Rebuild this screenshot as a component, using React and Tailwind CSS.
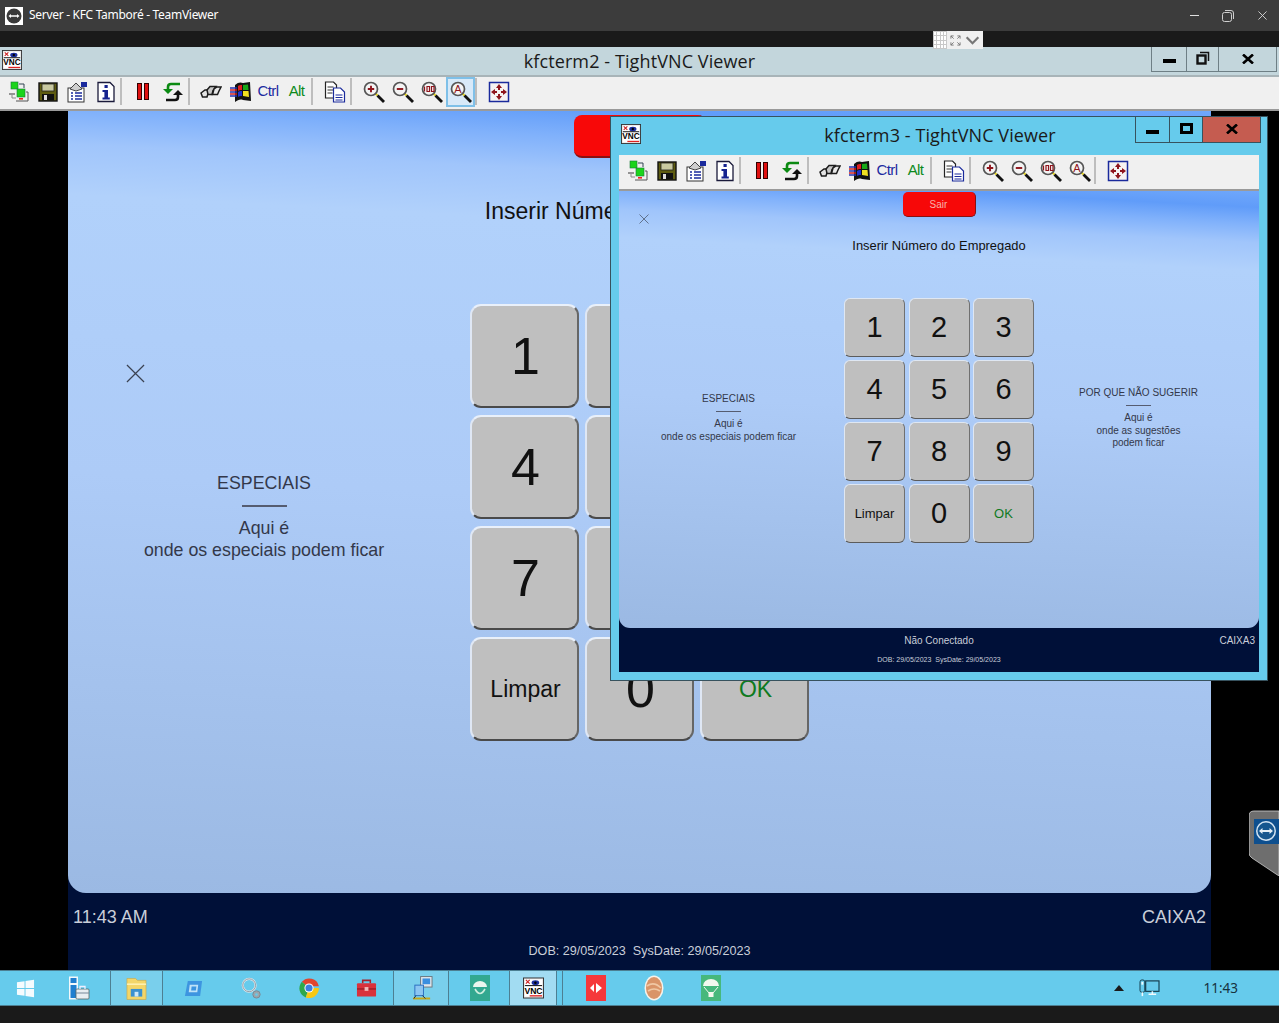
import { Fragment } from "react";

const KEYS = ["1", "2", "3", "4", "5", "6", "7", "8", "9", "Limpar", "0", "OK"];

function VncLogo({ className }) {
  return (
    <svg viewBox="0 0 22 22" className={className}>
      <rect x="0.5" y="0.5" width="21" height="21" fill="#e8e8e8" stroke="#333" />
      <rect x="2" y="2" width="18" height="18" fill="#fff" />
      <ellipse cx="13" cy="5.500" rx="4" ry="2.600" fill="#1b2f9e" />
      <circle cx="13" cy="5.500" r="1.300" fill="#000" />
      <path d="M3 2.500l4 4M7 2.500l-4 4" stroke="#c22" strokeWidth="1.200" />
      <path d="M2 8.500h18" stroke="#000" strokeWidth="1" />
      <text x="1.500" y="17" fontSize="10" fontWeight="700" fontFamily="Liberation Sans, sans-serif" fill="#000" textLength="19" lengthAdjust="spacingAndGlyphs">VNC</text>
      <path d="M7 19.200h13" stroke="#d22" strokeWidth="1.400" />
    </svg>
  );
}

function ConnIcon() {
  return (
    <svg viewBox="0 0 22 22" className="w-[22px] h-[22px]">
      <rect x="3" y="1" width="7" height="7" fill="#1bd41b" stroke="#1a7a3a" strokeWidth="0.6" />
      <path d="M11 3h5v4" fill="none" stroke="#345" />
      <path d="M1 13h6" stroke="#555" strokeWidth="1.200" />
      <rect x="9" y="8" width="8" height="8" fill="#1bd41b" stroke="#1a7a3a" strokeWidth="0.6" />
      <path d="M18 11h2v9H8" fill="none" stroke="#555" />
      <path d="M4 14v3h4" fill="none" stroke="#888" />
      <rect x="11" y="17" width="4" height="1.600" fill="#e22" />
    </svg>
  );
}

function SaveIcon() {
  return (
    <svg viewBox="0 0 22 22" className="w-[22px] h-[22px]">
      <rect x="2" y="2" width="18" height="18" fill="#5e5c10" stroke="#111" strokeWidth="1.400" />
      <rect x="5" y="3" width="12" height="7" fill="#c9c9a0" stroke="#222" strokeWidth="0.8" />
      <rect x="5" y="13" width="12" height="6.500" fill="#111" />
      <rect x="7" y="14" width="3" height="5" fill="#ddd" />
    </svg>
  );
}

function PropsIcon() {
  return (
    <svg viewBox="0 0 22 22" className="w-[22px] h-[22px]">
      <rect x="2" y="7" width="16" height="14" fill="#fff" stroke="#333" />
      <path d="M4 8l6-6 6 6-6 2z" fill="#cfcfcf" stroke="#444" />
      <rect x="15" y="1" width="6" height="5" fill="#1a2a9c" />
      <path d="M5 12h2M9 12h7M5 15h2M9 15h7M5 18h2M9 18h7" stroke="#1a2a9c" strokeWidth="1.400" />
    </svg>
  );
}

function InfoIcon() {
  return (
    <svg viewBox="0 0 22 22" className="w-[22px] h-[22px]">
      <path d="M3 1.500h12l4 4v15H3z" fill="#fff" stroke="#1a1a3a" strokeWidth="1.300" />
      <rect x="9.500" y="4" width="3.200" height="3" fill="#16238f" />
      <path d="M7.500 9h5.500v7.500h1.800V18.500H7.500v-2h1.900V11H7.500z" fill="#16238f" />
    </svg>
  );
}

function PauseIcon() {
  return (
    <svg viewBox="0 0 22 22" className="w-[22px] h-[22px]">
      <rect x="5.500" y="2.500" width="4" height="16" fill="#e01010" stroke="#300" />
      <rect x="12.500" y="2.500" width="4" height="16" fill="#e01010" stroke="#300" />
    </svg>
  );
}

function RefreshIcon() {
  return (
    <svg viewBox="0 0 22 22" className="w-[22px] h-[22px]">
      <path d="M18 3H9C7 3 6 4 6 6v3" fill="none" stroke="#0b8a12" strokeWidth="2.600" />
      <path d="M1 8h10l-5 5z" fill="#0b8a12" />
      <path d="M4 19h9c2 0 3-1 3-3v-3" fill="none" stroke="#111" strokeWidth="2.600" />
      <path d="M21 14H11l5-5z" fill="#111" />
    </svg>
  );
}

function KeysIcon() {
  return (
    <svg viewBox="0 0 22 22" className="w-[22px] h-[22px]">
      <path d="M1 12l4-3h6l-3 3.500 -1 3.500H2.500z" fill="#e4e4e4" stroke="#1c1c1c" strokeWidth="1.500" />
      <path d="M7 9l3-3.500h6l-3 4-1 4H8z" fill="#c8c8c8" stroke="#1c1c1c" strokeWidth="1.500" />
      <path d="M14 8l3-2h4l-2 4-1.500 3.500H12.500z" fill="#e8e8e8" stroke="#1c1c1c" strokeWidth="1.500" />
    </svg>
  );
}

function WinIcon() {
  return (
    <svg viewBox="0 0 22 22" className="w-[22px] h-[22px]">
      <path d="M6 4c3-3 6-3 8-2l7-1 1 19-8-1c-3-1-5 0-8 2z" fill="#111" />
      <path d="M9 5c1-1 2-1 4-1v5c-2 0-3 0-4 1z" fill="#e02020" />
      <path d="M14 4l5-.5.5 5.500-5.500 0z" fill="#18a818" />
      <path d="M9 11c1-1 2-1 4-1v5c-2 0-3 0-4 1z" fill="#2030c8" />
      <path d="M14 10h5.500l.5 6-6-1z" fill="#f0e020" />
      <path d="M1 7h7M1 11h7M1 15h7" stroke="#2030b0" strokeWidth="1.400" />
      <path d="M1 9h7M1 13h7" stroke="#d02020" strokeWidth="1.400" />
    </svg>
  );
}

function CopyIcon() {
  return (
    <svg viewBox="0 0 22 22" className="w-[22px] h-[22px]">
      <path d="M1.500 1h8l3 3v13h-11z" fill="#fff" stroke="#222" strokeWidth="1.200" />
      <path d="M3.500 6h6M3.500 9h6M3.500 12h5" stroke="#333" />
      <path d="M9.500 7h7l4 4v10h-11z" fill="#fff" stroke="#1a2a9c" strokeWidth="1.200" />
      <path d="M11.500 14h7M11.500 16.500h7M11.500 19h7" stroke="#1a2a9c" />
    </svg>
  );
}

function ZoomIcon({ type }) {
  return (
    <svg viewBox="0 0 22 22" className="w-[22px] h-[22px]">
      <path d="M12 12l2.500 2.500" stroke="#e8d820" strokeWidth="2.200" />
      <path d="M14.500 14.500l6.500 6.500" stroke="#111" strokeWidth="2.800" />
      <circle cx="8" cy="8" r="6.500" fill="#f4f4f4" stroke="#555" strokeWidth="1.700" />
      {type === "in" && <path d="M4.800 8h6.400M8 4.800v6.400" stroke="#8f141c" strokeWidth="1.900" />}
      {type === "out" && <path d="M4.800 8h6.400" stroke="#8f141c" strokeWidth="1.900" />}
      {type === "100" && (
        <path d="M3.500 5.500v5M6 5.500h2.500v5H6zM10.500 5.500h2.500v5h-2.500z" fill="none" stroke="#8f141c" strokeWidth="1.200" />
      )}
      {type === "auto" && (
        <text x="8" y="12" textAnchor="middle" fontSize="11" fontFamily="Liberation Sans, sans-serif" fill="#8f141c">A</text>
      )}
    </svg>
  );
}

function FullIcon() {
  return (
    <svg viewBox="0 0 22 22" className="w-[22px] h-[22px]">
      <rect x="1.500" y="1.500" width="19" height="19" fill="#f6f2f2" stroke="#1a2a9c" strokeWidth="1.500" />
      <path d="M11 3l3 4h-2v2h-2V7H8zM11 19l3-4h-2v-2h-2v2H8zM3 11l4-3v2h2v2H7v2zM19 11l-4-3v2h-2v2h2v2z" fill="#8f141c" />
    </svg>
  );
}

function Tool({ w, active, children }) {
  return (
    <div className={`${w} h-[30px] flex items-center justify-center shrink-0 ${active ? "bg-[#d8e9f8] border-2 border-[#7fc0e8]" : ""}`}>
      {children}
    </div>
  );
}

function Sep({ className }) {
  return <div className={`w-[2px] h-[27px] bg-[#bdbdbd] shrink-0 ${className}`} />;
}

// same toolbar in both viewers, only the highlighted zoom button differs
function Toolbar({ autoActive }) {
  return (
    <div className="flex items-center h-full pl-[4px] pb-[3px]">
      <Tool w="w-[29px]"><ConnIcon /></Tool>
      <Tool w="w-[29px]"><SaveIcon /></Tool>
      <Tool w="w-[29px]"><PropsIcon /></Tool>
      <Tool w="w-[29px]"><InfoIcon /></Tool>
      <Sep className="mr-[6px]" />
      <Tool w="w-[30px]"><PauseIcon /></Tool>
      <Tool w="w-[30px]"><RefreshIcon /></Tool>
      <Sep className="mr-[6px]" />
      <Tool w="w-[29px]"><KeysIcon /></Tool>
      <Tool w="w-[29px]"><WinIcon /></Tool>
      <Tool w="w-[28px]"><span className="text-[15px] tracking-[-0.6px] text-[#1c2aa0]">Ctrl</span></Tool>
      <Tool w="w-[29px]"><span className="text-[15px] tracking-[-0.6px] text-[#0d8a1c]">Alt</span></Tool>
      <Sep className="mr-[7px]" />
      <Tool w="w-[29px]"><CopyIcon /></Tool>
      <Sep className="mr-[7px] ml-[1px]" />
      <Tool w="w-[29px]"><ZoomIcon type="in" /></Tool>
      <Tool w="w-[29px]"><ZoomIcon type="out" /></Tool>
      <Tool w="w-[29px]"><ZoomIcon type="100" /></Tool>
      <Tool w="w-[29px]" active={autoActive}><ZoomIcon type="auto" /></Tool>
      <Sep className="mr-[7px]" />
      <Tool w="w-[29px]"><FullIcon /></Tool>
    </div>
  );
}

function Keypad({ small }) {
  return (
    <div className={small ? "grid grid-cols-[61px_61px_61px] auto-rows-[59px] gap-x-[3.5px] gap-y-[3px]" : "grid grid-cols-[109px_109px_109px] auto-rows-[104px] gap-x-[6px] gap-y-[7px]"}>
      {KEYS.map((k) => {
        const word = k.length > 1;
        return (
          <div
            key={k}
            className={`flex items-center justify-center bg-[#bfbfbf] ${k === "OK" ? "text-[#0f7a1f]" : "text-[#111]"} ${
              small
                ? `rounded-[6px] border-[1.5px] border-t-[#dfe7f2] border-l-[#dfe7f2] border-r-[#707070] border-b-[#5c5c5c] ${word ? "text-[13px]" : "text-[29px]"}`
                : `pl-[2px] rounded-[11px] border-2 border-t-[#e9f0fa] border-l-[#dfe7f4] border-r-[#666] border-b-[#4a4a4a] ${word ? "text-[23px]" : "text-[52px]"}`
            }`}
          >
            {k}
          </div>
        );
      })}
    </div>
  );
}

function Cross({ className }) {
  return (
    <svg viewBox="0 0 20 20" className={className}>
      <path d="M1 1l18 18M19 1L1 19" stroke="#3b4252" strokeWidth="1.300" fill="none" />
    </svg>
  );
}

function WinButton({ w, red, children }) {
  return (
    <div className={`${w} h-full flex items-center justify-center ${red ? "bg-[#c55c50]" : ""}`}>{children}</div>
  );
}

function ControlIcon({ type }) {
  if (type === "min") return <div className="w-[13px] h-[4px] mt-[4px] bg-black" />;
  if (type === "max") return <div className="w-[13px] h-[11px] border-[3px] border-black -mt-[2px]" />;
  if (type === "restore")
    return (
      <svg viewBox="0 0 14 14" className="w-[14px] h-[14px] -mt-[2px]">
        <path d="M4 1.500h8.500V10" fill="none" stroke="#111" strokeWidth="1.500" />
        <rect x="1.500" y="4.500" width="8" height="8" fill="none" stroke="#111" strokeWidth="2.400" />
      </svg>
    );
  return (
    <svg viewBox="0 0 12 10" className="w-[12px] h-[10px] -mt-[1px]">
      <path d="M1 0.500l10 9M11 0.500l-10 9" stroke="#000" strokeWidth="2.600" />
    </svg>
  );
}

function OuterScreen() {
  return (
    <div className="flex-1 flex bg-black">
      <div className="w-[68px] shrink-0" />
      <div className="w-[1143px] shrink-0 flex flex-col bg-[#001038]">
        <div className="relative flex-1 flex flex-col items-center rounded-b-[18px] bg-[linear-gradient(183deg,#6fa7fb_0%,#609cf9_3.5%,#80b1fb_7%,#a0c5fb_11%,#b1d1fb_17%,#adcbf7_50%,#9bb9e3_100%)]">
          <div className="mt-[4px] w-[132px] h-[43px] rounded-[8px] bg-[#f80808] border-b-2 border-r-2 border-[#8a1010]" />
          <div className="mt-[39px] h-[28px] text-[23px] leading-[28px] text-[#111]">Inserir Número do Empregado</div>
          <Cross className="absolute left-[58px] top-[253px] w-[19px] h-[19px]" />
          <div className="mt-[79px] w-full grid grid-cols-[402px_339px_1fr]">
            <div className="pt-[168px] pr-[10px] flex flex-col items-center text-[#33384a]">
              <div className="text-[17.8px] leading-[22px]">ESPECIAIS</div>
              <div className="mt-[11px] w-[45px] h-[2px] bg-[#555c70]" />
              <div className="mt-[10px] text-[17.8px] leading-[22px]">Aqui é</div>
              <div className="text-[17.8px] leading-[23px]">onde os especiais podem ficar</div>
            </div>
            <Keypad />
          </div>
        </div>
        <div className="h-[77px] shrink-0 px-[5px] text-[#c9ced9] relative">
          <div className="flex justify-between pt-[12px] text-[18px] leading-[24px]">
            <span>11:43 AM</span>
            <span>CAIXA2</span>
          </div>
          <div className="mt-[13px] text-center text-[12.6px] leading-[18px]">DOB: 29/05/2023 &nbsp;SysDate: 29/05/2023</div>
        </div>
      </div>
      <div className="flex-1" />
    </div>
  );
}

function InnerWindow() {
  return (
    <div className="absolute left-[610px] top-[116px] w-[658px] h-[565px] border border-[#37525e] bg-[#66cbec] px-[8px] pb-[8px] flex flex-col">
      <div className="h-[38px] shrink-0 relative flex items-center justify-center pb-[2px] text-[18px] text-[#1a1a1a] font-['Open_Sans',sans-serif]">
        <VncLogo className="absolute left-[2px] top-[7px] w-[20px] h-[20px]" />
        <span className="pl-[2px] tracking-[0.1px]">kfcterm3 - TightVNC Viewer</span>
        <div className="absolute -right-[2px] top-0 h-[26px] flex border border-t-0 border-[#37525e] divide-x divide-[#37525e]">
          <WinButton w="w-[34px]"><ControlIcon type="min" /></WinButton>
          <WinButton w="w-[33px]"><ControlIcon type="max" /></WinButton>
          <WinButton w="w-[57px]" red><ControlIcon type="x" /></WinButton>
        </div>
      </div>
      <div className="h-[36px] shrink-0 bg-[#f0f0f0] border-b-2 border-[#9a9a9a]">
        <Toolbar />
      </div>
      <div className="flex-1 flex flex-col bg-[#001038]">
        <div className="relative flex-1 flex flex-col items-center rounded-b-[11px] bg-[linear-gradient(183deg,#6fa7fb_0%,#609cf9_3.5%,#80b1fb_7%,#a0c5fb_11%,#b1d1fb_17%,#adcbf7_50%,#9bb9e3_100%)]">
          <div className="mt-[1px] w-[73px] h-[25px] rounded-[5px] bg-[#f70808] border-b border-r border-[#8a1010] flex items-center justify-center text-[10px] text-[#f8b0a8]">Sair</div>
          <div className="mt-[21px] h-[16px] text-[12.9px] leading-[16px] text-[#111]">Inserir Número do Empregado</div>
          <Cross className="absolute left-[20px] top-[23px] w-[10px] h-[10px]" />
          <div className="mt-[44px] w-full grid grid-cols-[225px_190px_1fr]">
            <div className="pt-[95px] pr-[6px] flex flex-col items-center text-[10px] text-[#33384a]">
              <div className="leading-[12px]">ESPECIAIS</div>
              <div className="mt-[6px] w-[25px] h-px bg-[#555c70]" />
              <div className="mt-[6px] leading-[12px]">Aqui é</div>
              <div className="leading-[13px]">onde os especiais podem ficar</div>
            </div>
            <Keypad small />
            <div className="pt-[89px] pr-[16px] flex flex-col items-center text-[10px] text-[#33384a]">
              <div className="leading-[12px]">POR QUE NÃO SUGERIR</div>
              <div className="mt-[6px] w-[25px] h-px bg-[#555c70]" />
              <div className="mt-[6px] leading-[12px]">Aqui é</div>
              <div className="leading-[13px]">onde as sugestões</div>
              <div className="leading-[12px]">podem ficar</div>
            </div>
          </div>
        </div>
        <div className="h-[44px] shrink-0 relative text-[#c9ced9]">
          <div className="pt-[7px] text-center text-[10px] leading-[12px]">Não Conectado</div>
          <span className="absolute right-[4px] top-[7px] text-[10px] leading-[12px]">CAIXA3</span>
          <div className="mt-[8px] text-center text-[7px] leading-[9px]">DOB: 29/05/2023 &nbsp;SysDate: 29/05/2023</div>
        </div>
      </div>
    </div>
  );
}

function TaskIcon({ children }) {
  return <div className="w-[22px] h-[24px] flex items-center justify-center">{children}</div>;
}

const TASK_ITEMS = [
  { w: "w-[50px]", cls: "", icon: (
    <svg viewBox="0 0 20 20" className="w-[19px] h-[19px]"><path d="M1 3.500l8-1.200v7.200H1zM10 2.100l9-1.300v8.700h-9zM1 10.500h8v7.200l-8-1.200zM10 10.500h9v8.700l-9-1.300z" fill="#f5fbfe" /></svg>
  ) },
  { w: "w-[60px]", cls: "pr-[2px]", icon: (
    <svg viewBox="0 0 22 24" className="w-[22px] h-[24px]">
      <rect x="1" y="0.500" width="9" height="23" fill="#f2f8fb" />
      <rect x="2.500" y="2" width="6" height="5" fill="#1f7fd0" />
      <rect x="2.500" y="9" width="6" height="13" fill="#1f7fd0" />
      <rect x="8" y="13" width="13" height="10" rx="1" fill="#e8eef2" stroke="#566" strokeWidth="0.8" />
      <path d="M12 13v-2.500h5V13" fill="none" stroke="#eef" strokeWidth="1.300" />
      <path d="M8 17h13" stroke="#789" />
    </svg>
  ) },
  { w: "w-[53px]", cls: "bg-[#79cfec] border-x border-[#4d7f92]", icon: (
    <svg viewBox="0 0 22 24" className="w-[21px] h-[24px]">
      <path d="M1 2h9l2 2h9v20H1z" fill="#f3d669" stroke="#c9a94c" strokeWidth="0.7" />
      <path d="M1 8h20" stroke="#fff3b8" strokeWidth="1.500" />
      <rect x="5" y="13" width="12" height="8" fill="#3b91cf" />
      <rect x="9" y="16" width="4" height="5" fill="#cfe9f8" />
    </svg>
  ) },
  { w: "w-[58px]", cls: "pl-[3px]", icon: (
    <svg viewBox="0 0 20 20" className="w-[19px] h-[19px]"><path d="M4 2h15l-2 16H1z" fill="#3d95e0" /><path d="M6 6h9l-1 8H5z" fill="#bfe3f8" /><path d="M8 8h5l-.5 4H7.500z" fill="#3d95e0" /></svg>
  ) },
  { w: "w-[57px]", cls: "pl-[2px]", icon: (
    <svg viewBox="0 0 24 26" className="w-[22px] h-[24px]">
      <circle cx="10" cy="10" r="7" fill="none" stroke="#dfe6ea" strokeWidth="2.400" />
      <circle cx="10" cy="10" r="7" fill="none" stroke="#8a9aa6" strokeWidth="1" />
      <circle cx="18" cy="20" r="4" fill="#9aa6ae" stroke="#7a8790" />
      <circle cx="18" cy="20" r="1.400" fill="#66cbec" />
    </svg>
  ) },
  { w: "w-[58px]", cls: "pl-[4px]", icon: (
    <svg viewBox="0 0 24 24" className="w-[22px] h-[22px]">
      <path d="M12 12L4.200 5.200A10.800 10.800 0 0 1 22.800 10H12z" fill="#e0452f" />
      <path d="M12 12l-3.500 10.400A10.800 10.800 0 0 1 4.200 5.200z" fill="#2da84c" />
      <path d="M12 12h10.800A10.800 10.800 0 0 1 8.500 22.400z" fill="#f6c813" />
      <circle cx="12" cy="12" r="5" fill="#fff" />
      <circle cx="12" cy="12" r="3.900" fill="#3b7fe0" />
    </svg>
  ) },
  { w: "w-[58px]", cls: "pl-[4px] border-r border-[#4d7f92]", icon: (
    <svg viewBox="0 0 22 20" className="w-[21px] h-[20px]">
      <path d="M7 5V2h8v3" fill="none" stroke="#a4232c" strokeWidth="1.600" />
      <rect x="1" y="5" width="20" height="14" rx="1" fill="#d8323c" />
      <path d="M1 11h20" stroke="#8e1a22" strokeWidth="1.200" />
      <rect x="9" y="9" width="4" height="4" fill="#f2b8b8" />
    </svg>
  ) },
  { w: "w-[55px]", cls: "pl-[3px] bg-[#79cfec] border-r border-[#4d7f92]", icon: (
    <svg viewBox="0 0 22 26" className="w-[21px] h-[26px]">
      <rect x="9" y="1" width="12" height="11" fill="#dfe5ea" stroke="#6a7780" />
      <rect x="11" y="3" width="8" height="6" fill="#3a8fe0" />
      <rect x="3" y="10" width="9" height="11" fill="#8cc6f2" stroke="#2a6fc0" />
      <path d="M1 24h18" stroke="#c8a818" strokeWidth="2" />
      <path d="M4 21l-2 3M11 21l3 3" stroke="#223" />
    </svg>
  ) },
  { w: "w-[61px]", cls: "pl-[2px] border-r border-[#4d7f92]", icon: (
    <svg viewBox="0 0 20 26" className="w-[20px] h-[26px]">
      <rect width="20" height="26" fill="#32a890" />
      <path d="M3 12a7 6 0 0 1 14 0z" fill="#eaf5ee" />
      <path d="M5 14q5 9 10 0" fill="none" stroke="#cdeedd" strokeWidth="1.600" />
    </svg>
  ) },
  { w: "w-[47px]", cls: "bg-[#a2dcf2] border-r border-[#4d7f92]", icon: <VncLogo className="w-[21px] h-[26px]" /> },
  { w: "w-[6px]", cls: "border-r border-[#4d7f92]", icon: null },
  { w: "w-[62px]", cls: "pl-[4px]", icon: (
    <svg viewBox="0 0 20 26" className="w-[20px] h-[26px]">
      <rect width="20" height="26" fill="#f5383b" />
      <path d="M4 13l4-4v8zM10 8l6 5-6 5z" fill="#fff" />
    </svg>
  ) },
  { w: "w-[57px]", cls: "", icon: (
    <svg viewBox="0 0 20 26" className="w-[20px] h-[26px]">
      <ellipse cx="10" cy="13" rx="9.500" ry="12.500" fill="#f6f3ec" />
      <ellipse cx="10" cy="13" rx="8" ry="11" fill="#d99468" />
      <path d="M3 11q7-5 14 2M4 16q6-4 12 0" fill="none" stroke="#f0c8a4" strokeWidth="1.600" />
    </svg>
  ) },
  { w: "w-[58px]", cls: "", icon: (
    <svg viewBox="0 0 20 26" className="w-[20px] h-[26px]">
      <rect width="20" height="26" fill="#46b87c" />
      <path d="M2 11a8 7 0 0 1 16 0z" fill="#f2f8ee" />
      <path d="M3 12l5 6M17 12l-5 6" stroke="#f2f8ee" />
      <rect x="7.500" y="17" width="5" height="5" fill="#f2f8ee" />
    </svg>
  ) },
];

export default function App() {
  return (
    <div className="relative w-[1279px] h-[1023px] overflow-hidden flex flex-col bg-[#1a1a1a] font-['Liberation_Sans',Arial,sans-serif]">
      {/* TeamViewer title bar */}
      <div className="h-[31px] shrink-0 flex items-center bg-[#3c3c3c] text-white">
        <div className="ml-[5px] w-[18px] h-[18px] bg-white flex items-center justify-center">
          <svg viewBox="0 0 16 16" className="w-[16px] h-[16px]">
            <circle cx="8" cy="8" r="7.500" fill="#3a3a3a" />
            <path d="M2.500 8l2.500-2v1.300h6V6l2.500 2-2.500 2V8.700H5V10z" fill="#fff" />
          </svg>
        </div>
        <span className="ml-[6px] -mt-[2px] text-[12px] tracking-[-0.3px] font-['Noto_Sans',sans-serif]">Server - KFC Tamboré - TeamViewer</span>
        <div className="ml-auto flex items-center text-[#d8d8d8]">
          <div className="w-[34px] flex justify-center"><div className="w-[9px] h-px bg-[#e0e0e0]" /></div>
          <div className="w-[34px] flex justify-center">
            <svg viewBox="0 0 12 12" className="w-[12px] h-[12px]">
              <rect x="0.500" y="2.500" width="9" height="9" rx="2" fill="none" stroke="#cfcfcf" />
              <path d="M3 0.500h6a2.500 2.500 0 0 1 2.500 2.500v6" fill="none" stroke="#cfcfcf" />
            </svg>
          </div>
          <div className="w-[34px] flex justify-center">
            <svg viewBox="0 0 10 10" className="w-[9px] h-[9px]"><path d="M0.500 0.500l9 9M9.500 0.500l-9 9" stroke="#d8d8d8" /></svg>
          </div>
        </div>
      </div>
      <div className="h-[16px] shrink-0 bg-[#1a1a1a]" />

      {/* Viewer for kfcterm2 */}
      <div className="h-[30px] shrink-0 relative flex items-center justify-center bg-[#c3d6dc] border-b-2 border-[#a8b4b8] text-[18px] text-[#1a1a1a] font-['Open_Sans',sans-serif]">
        <VncLogo className="absolute left-[2px] top-[3px] w-[20px] h-[20px]" />
        <span className="tracking-[0.1px]">kfcterm2 - TightVNC Viewer</span>
        <div className="absolute right-[2px] top-0 h-[25px] flex border border-t-0 border-[#6e7f85] divide-x divide-[#6e7f85]">
          <WinButton w="w-[35px]"><ControlIcon type="min" /></WinButton>
          <WinButton w="w-[32px]"><ControlIcon type="restore" /></WinButton>
          <WinButton w="w-[57px]"><ControlIcon type="x" /></WinButton>
        </div>
      </div>
      <div className="h-[34px] shrink-0 bg-[#f0f0f0] border-b-2 border-[#9a9a9a]">
        <Toolbar autoActive />
      </div>

      <OuterScreen />

      {/* Windows taskbar */}
      <div className="h-[36px] shrink-0 flex bg-[#66cbec] border-y border-[#4d7f92]">
        {TASK_ITEMS.map((item, i) => (
          <Fragment key={i}>
            <div className={`${item.w} shrink-0 flex items-center justify-center ${item.cls}`}>
              {item.icon && <TaskIcon>{item.icon}</TaskIcon>}
            </div>
          </Fragment>
        ))}
        <div className="flex-1 flex items-center justify-end">
          <div className="mr-[15px] w-0 h-0 border-x-[5px] border-x-transparent border-b-[6px] border-b-[#1a1a1a]" />
          <svg viewBox="0 0 22 20" className="w-[21px] h-[19px]">
            <rect x="7" y="2" width="14" height="11" fill="none" stroke="#143a4a" strokeWidth="1.200" />
            <path d="M10 16h8M14 13v3" stroke="#f0fbff" strokeWidth="1.600" />
            <rect x="1" y="1" width="5" height="13" rx="2" fill="#66cbec" stroke="#143a4a" />
            <rect x="2.500" y="3" width="2" height="3" fill="#f0fbff" />
            <path d="M3.500 14v4" stroke="#f0fbff" strokeWidth="1.600" />
          </svg>
          <span className="ml-[43px] mr-[41px] text-[13.5px] font-['Noto_Sans',sans-serif] text-[#17323e]">11:43</span>
        </div>
      </div>
      <div className="h-[17px] shrink-0 bg-[#1a1a1a]" />

      <InnerWindow />

      {/* TeamViewer side handle */}
      <svg viewBox="0 0 30 66" className="absolute left-[1249px] top-[810px] w-[30px] h-[66px]">
        <path d="M0 6q0-5 5-5h25v65L3 48q-3-2-3-5z" fill="#6e6e6e" stroke="#cfcfcf" strokeWidth="0.8" />
        <rect x="5" y="9" width="25" height="25" fill="#0e4f8e" />
        <circle cx="17" cy="21" r="10" fill="#d4e4f2" />
        <circle cx="17" cy="21" r="8.500" fill="#16568f" />
        <path d="M10 21l3.500-3v2h7v-2l3.500 3-3.500 3v-2h-7v2z" fill="#e4eef6" />
      </svg>

      {/* TeamViewer panel handle */}
      <div className="absolute left-[933px] top-[31px] w-[50px] h-[18px] flex bg-[#f0f0f0]">
        <div className="w-[14px] h-full grid grid-cols-4 gap-[1px] p-[1px] bg-[#c8c8c8]">
          {Array.from({ length: 16 }).map((_, i) => (
            <div key={i} className="bg-white" />
          ))}
        </div>
        <div className="flex-1 flex items-center justify-around px-[1px]">
          <svg viewBox="0 0 12 12" className="w-[11px] h-[11px]">
            <path d="M1 4V1h3M8 1h3v3M1 8v3h3M11 8v3H8M1 1l3 3M11 1L8 4M1 11l3-3M11 11L8 8" fill="none" stroke="#777" />
          </svg>
          <svg viewBox="0 0 16 10" className="w-[15px] h-[9px]">
            <path d="M1.500 1.500L8 8l6.500-6.500" fill="none" stroke="#777" strokeWidth="2.400" />
          </svg>
        </div>
      </div>
    </div>
  );
}
